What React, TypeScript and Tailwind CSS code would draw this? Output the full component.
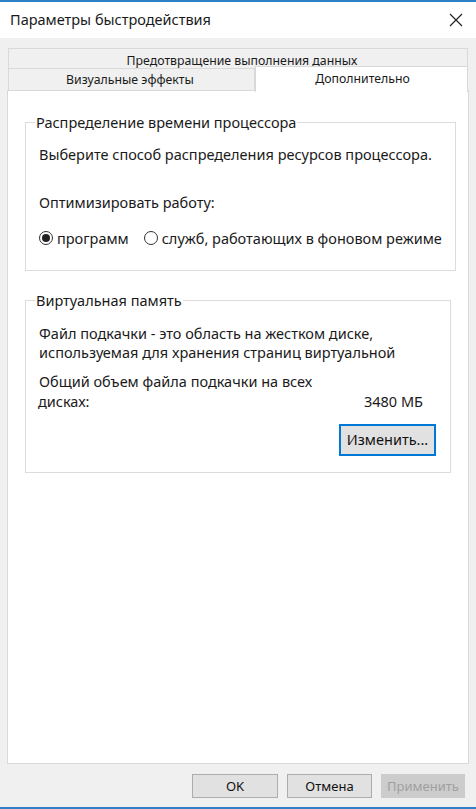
import React from "react";

const font = { fontFamily: '"Noto Sans", "DejaVu Sans", sans-serif' };

function Radio({ checked }: { checked: boolean }) {
  return (
    <span className="w-[14px] h-[14px] rounded-full border border-[#333] bg-white flex items-center justify-center shrink-0">
      {checked && <span className="w-[8px] h-[8px] rounded-full bg-[#222]" />}
    </span>
  );
}

function Button({
  children,
  className = "",
  disabled = false,
}: {
  children: React.ReactNode;
  className?: string;
  disabled?: boolean;
}) {
  return (
    <button
      className={
        "h-[24px] border text-[13px] leading-none flex items-center justify-center " +
        (disabled ? "border-[#cccccc] bg-[#cccccc] text-[#a0a0a0]" : "border-[#adadad] bg-[#e1e1e1] text-[#111]") +
        " " +
        className
      }
    >
      {children}
    </button>
  );
}

export default function App() {
  return (
    <div
      className="w-[476px] h-[809px] flex flex-col bg-[#f0f0f0] border-t-[2px] border-b-[2px] border-[#2f7fc6] text-[#1a1a1a]"
      style={font}
    >
      {/* title bar */}
      <div className="h-[36px] bg-white flex items-center justify-between pl-[10px] pr-[13px] shrink-0">
        <span className="text-[14.5px]">Параметры быстродействия</span>
        <svg width="14" height="14" viewBox="0 0 14 14" className="text-[#222]">
          <path d="M1 1 L13 13 M13 1 L1 13" stroke="currentColor" strokeWidth="1.2" fill="none" />
        </svg>
      </div>

      <div className="flex-1 flex flex-col pt-[10px] px-[7px]">
        {/* back tab row */}
        <div className="ml-[1px] mr-[1px] h-[20px] border border-b-0 border-[#d9d9d9] flex items-end justify-center pb-[1px] text-[12.3px] leading-none">
          <span className="ml-[8px]">Предотвращение выполнения данных</span>
        </div>
        {/* front tab row */}
        <div className="flex h-[23px] -mb-[1px] relative z-10">
          <div className="ml-[1px] w-[247px] border border-[#d9d9d9] border-b-0 flex items-center justify-center pt-[1px] text-[12.3px] leading-none">
            <span className="-ml-[3px]">Визуальные эффекты</span>
          </div>
          <div className="flex-1 mr-[1px] -mt-[2px] h-[26px] bg-white border border-[#d9d9d9] border-b-0 flex items-start justify-center pt-[6px] text-[12.3px] leading-none">
            <span className="ml-[2px]">Дополнительно</span>
          </div>
        </div>

        {/* tab page */}
        <div className="h-[674px] bg-white border border-[#d9d9d9] px-[17px] pt-[24px]">
          <fieldset className="border border-[#dcdcdc] h-[156px] px-[13px] pt-[6px]">
            <legend className="text-[14.5px] px-[1px] ml-[-4px] leading-none">Распределение времени процессора</legend>
            <div className="text-[14.5px] leading-none mt-[11px]">Выберите способ распределения ресурсов процессора.</div>
            <div className="text-[14.5px] leading-none mt-[34px]">Оптимизировать работу:</div>
            <div className="flex items-center mt-[21px] text-[14.5px] leading-none">
              <Radio checked />
              <span className="ml-[4px]">программ</span>
              <span className="ml-[15px]" />
              <Radio checked={false} />
              <span className="ml-[4px] whitespace-nowrap">служб, работающих в фоновом режиме</span>
            </div>
          </fieldset>

          <fieldset className="border border-[#dcdcdc] h-[180px] mt-[22px] px-[13px] pt-[6px]">
            <legend className="text-[14.5px] px-[1px] ml-[-4px] leading-none">Виртуальная память</legend>
            <div className="text-[14.5px] leading-[19px] mt-[10px]">
              <div>Файл подкачки - это область на жестком диске,</div>
              <div>используемая для хранения страниц виртуальной</div>
            </div>
            <div className="text-[14.5px] leading-[20px] mt-[9px] flex items-end justify-between pr-[14px]">
              <div>
                <div>Общий объем файла подкачки на всех</div>
                <div className="-ml-[1px]">дисках:</div>
              </div>
              <div>3480 МБ</div>
            </div>
            <div className="flex justify-end mt-[13px] pr-[1px]">
              <button className="w-[97px] h-[32px] border-2 border-[#0078d7] bg-[#e1e1e1] text-[14.5px] leading-none text-[#111]">
                Изменить...
              </button>
            </div>
          </fieldset>
        </div>

        {/* dialog buttons */}
        <div className="flex justify-end gap-[9px] pt-[10px] pr-[4px]">
          <Button className="w-[86px]">OK</Button>
          <Button className="w-[85px]">Отмена</Button>
          <Button className="w-[84px]" disabled>
            Применить
          </Button>
        </div>
      </div>
    </div>
  );
}
